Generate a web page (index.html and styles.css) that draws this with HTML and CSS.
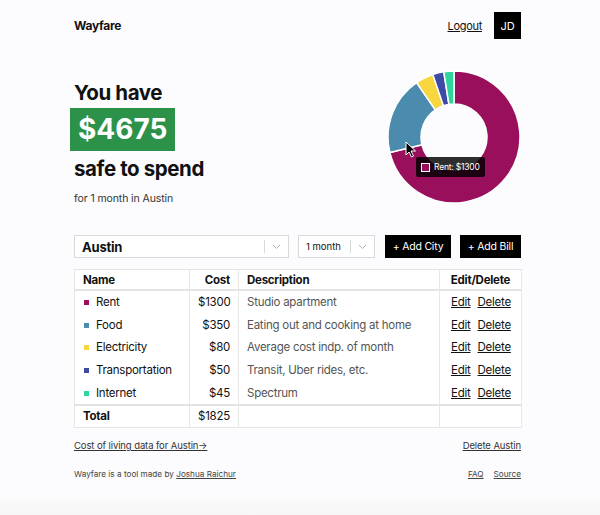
FILE: index.html
```html
<!DOCTYPE html>
<html lang="en">
<head>
<meta charset="utf-8">
<title>Wayfare</title>
<link rel="stylesheet" href="styles.css">
</head>
<body>
<div class="page">
  <header class="topbar">
    <div class="brand">Wayfare</div>
    <nav class="user">
      <a href="#" class="logout">Logout</a>
      <span class="avatar">JD</span>
    </nav>
  </header>

  <section class="hero">
    <div class="summary">
      <h1 class="line">You have</h1>
      <div class="amount">$4675</div>
      <h1 class="line">safe to spend</h1>
      <p class="period">for 1 month in Austin</p>
    </div>
    <div class="chart">
      <svg width="134" height="134" viewBox="0 0 134 134">
        <g stroke="#fff" stroke-width="1.5" stroke-linejoin="round">
          <path fill="#990f5c" d="M67,1 A66,66 0 1 1 2.84,82.47 L34.92,74.74 A33,33 0 1 0 67,34 Z"/>
          <path fill="#4b8bae" d="M2.84,82.47 A66,66 0 0 1 29.60,12.62 L48.30,39.81 A33,33 0 0 0 34.92,74.74 Z"/>
          <path fill="#f7d640" d="M29.60,12.62 A66,66 0 0 1 45.79,4.50 L56.40,35.75 A33,33 0 0 0 48.30,39.81 Z"/>
          <path fill="#3e4ba6" d="M45.79,4.50 A66,66 0 0 1 56.81,1.79 L61.91,34.40 A33,33 0 0 0 56.40,35.75 Z"/>
          <path fill="#2ed59d" d="M56.81,1.79 A66,66 0 0 1 67,1 L67,34 A33,33 0 0 0 61.91,34.40 Z"/>
        </g>
      </svg>
      <div class="tooltip"><span class="tip-swatch"></span>Rent: $1300</div>
      <svg class="cursor" width="12" height="17" viewBox="0 0 12 17">
        <path d="M1,1 L1,14 L4,11 L6.5,16 L8.5,15 L6,10 L10.5,10 Z" fill="#000" stroke="#fff" stroke-width="1"/>
      </svg>
    </div>
  </section>

  <section class="controls">
    <div class="select city">
      <span class="select-value">Austin</span>
      <span class="select-sep"></span>
      <svg class="chev" width="9" height="6" viewBox="0 0 9 6"><polyline points="1,1 4.5,4.5 8,1" fill="none" stroke="#b5b5b5" stroke-width="1"/></svg>
    </div>
    <div class="select months">
      <span class="select-value">1 month</span>
      <span class="select-sep"></span>
      <svg class="chev" width="9" height="6" viewBox="0 0 9 6"><polyline points="1,1 4.5,4.5 8,1" fill="none" stroke="#b5b5b5" stroke-width="1"/></svg>
    </div>
    <button class="btn add-city">+ Add City</button>
    <button class="btn add-bill">+ Add Bill</button>
  </section>

  <table class="bills">
    <colgroup>
      <col class="w-name">
      <col class="w-cost">
      <col class="w-desc">
      <col class="w-act">
    </colgroup>
    <thead>
      <tr>
        <th>Name</th>
        <th class="c-cost">Cost</th>
        <th>Description</th>
        <th class="c-act-h">Edit/Delete</th>
      </tr>
    </thead>
    <tbody>
      <tr>
        <td><span class="sw sw-rent"></span>Rent</td>
        <td class="c-cost">$1300</td>
        <td class="c-desc">Studio apartment</td>
        <td class="c-act"><a href="#">Edit</a><a href="#">Delete</a></td>
      </tr>
      <tr>
        <td><span class="sw sw-food"></span>Food</td>
        <td class="c-cost">$350</td>
        <td class="c-desc">Eating out and cooking at home</td>
        <td class="c-act"><a href="#">Edit</a><a href="#">Delete</a></td>
      </tr>
      <tr>
        <td><span class="sw sw-elec"></span>Electricity</td>
        <td class="c-cost">$80</td>
        <td class="c-desc">Average cost indp. of month</td>
        <td class="c-act"><a href="#">Edit</a><a href="#">Delete</a></td>
      </tr>
      <tr>
        <td><span class="sw sw-trans"></span>Transportation</td>
        <td class="c-cost">$50</td>
        <td class="c-desc">Transit, Uber rides, etc.</td>
        <td class="c-act"><a href="#">Edit</a><a href="#">Delete</a></td>
      </tr>
      <tr>
        <td><span class="sw sw-net"></span>Internet</td>
        <td class="c-cost">$45</td>
        <td class="c-desc">Spectrum</td>
        <td class="c-act"><a href="#">Edit</a><a href="#">Delete</a></td>
      </tr>
    </tbody>
    <tfoot>
      <tr>
        <td class="total">Total</td>
        <td class="c-cost">$1825</td>
        <td></td>
        <td></td>
      </tr>
    </tfoot>
  </table>

  <div class="links">
    <a href="#">Cost of living data for Austin→</a>
    <a href="#">Delete Austin</a>
  </div>

  <footer class="footer">
    <span>Wayfare is a tool made by <a href="#">Joshua Raichur</a></span>
    <span class="footer-links"><a href="#">FAQ</a><a href="#">Source</a></span>
  </footer>
</div>
</body>
</html>
```

FILE: styles.css
```css
html {
  min-height: 100%;
  background: linear-gradient(#fcfbfd calc(100% - 25px), #f7f7f8);
}
body {
  margin: 0;
  font-family: Inter, "Helvetica Neue", Arial, sans-serif;
  color: #111;
}
a { color: inherit; }

.page {
  width: 447px;
  margin-left: 74px;
}

.topbar {
  display: flex;
  justify-content: space-between;
  align-items: center;
  padding-top: 12px;
  height: 27px;
}
.brand {
  font-size: 12px;
  font-weight: 700;
  letter-spacing: -0.3px;
}
.user {
  display: flex;
  align-items: center;
  gap: 12px;
}
.logout {
  font-size: 11px;
  letter-spacing: -0.3px;
  color: #111;
}
.avatar {
  width: 27px;
  height: 27px;
  background: #000;
  color: #fff;
  font-size: 11px;
  display: flex;
  align-items: center;
  justify-content: center;
}

.hero {
  display: flex;
  justify-content: space-between;
  align-items: flex-start;
  margin-top: 31px;
}
.summary {
  padding-top: 10px;
}
.line {
  margin: 0;
  font-size: 20.5px;
  line-height: 26px;
  font-weight: 700;
  letter-spacing: -0.4px;
}
.amount {
  width: max-content;
  margin: 2px 0 5px -4px;
  padding: 0 8px;
  height: 43px;
  line-height: 43px;
  background: #2d9249;
  color: #fff;
  font-size: 28px;
  font-weight: 700;
}
.period {
  margin: 10px 0 0;
  font-size: 10.5px;
  letter-spacing: -0.1px;
  color: #333;
}

.chart {
  position: relative;
  width: 134px;
  height: 134px;
}
.chart svg { display: block; }
.tooltip {
  position: absolute;
  left: 29px;
  top: 87px;
  height: 20px;
  padding: 0 5px;
  display: flex;
  align-items: center;
  gap: 4px;
  background: rgba(0, 0, 0, 0.82);
  color: #fff;
  font-size: 8.5px;
  letter-spacing: -0.2px;
  border-radius: 2px;
}
.tip-swatch {
  width: 7px;
  height: 7px;
  background: #990f5c;
  border: 1px solid #fff;
}
.cursor {
  position: absolute;
  left: 18px;
  top: 71px;
}

.controls {
  display: flex;
  align-items: center;
  margin-top: 30px;
  height: 23px;
}
.select {
  display: flex;
  align-items: center;
  height: 23px;
  box-sizing: border-box;
  border: 1px solid #d9d9d9;
  background: #fff;
}
.city {
  width: 215px;
  padding-left: 7px;
}
.city .select-value {
  flex: 1;
  font-size: 13px;
  font-weight: 700;
  letter-spacing: -0.2px;
}
.months {
  width: 77px;
  margin-left: 9px;
  padding-left: 7px;
}
.months .select-value {
  flex: 1;
  font-size: 9.5px;
}
.select-sep {
  width: 1px;
  height: 13px;
  background: #d9d9d9;
  margin-right: 7px;
}
.chev {
  margin-right: 7px;
}
.btn {
  height: 23px;
  border: 0;
  background: #000;
  color: #fff;
  font-family: inherit;
  font-size: 10.5px;
  letter-spacing: -0.2px;
  padding: 0;
}
.add-city {
  width: 66px;
  margin-left: 10px;
}
.add-bill {
  width: 61px;
  margin-left: 9px;
}

.bills {
  margin-top: 11px;
  width: 447px;
  table-layout: fixed;
  border-collapse: collapse;
  font-size: 11.5px;
  letter-spacing: -0.25px;
  background: #fff;
  border: 1px solid #e4e4e4;
}
.w-name { width: 115px; }
.w-cost { width: 49px; }
.w-desc { width: 201px; }
.w-act { width: 82px; }
.bills th, .bills td {
  padding: 0 8px;
  height: 22.6px;
  border-left: 1px solid #e8e8e8;
  border-right: 1px solid #e8e8e8;
  white-space: nowrap;
}
.bills th {
  font-weight: 700;
  text-align: left;
  height: 19px;
  border-bottom: 2px solid #e4e4e4;
  color: #111;
}
.bills tfoot td {
  border-top: 2px solid #e4e4e4;
  height: 21px;
}
.bills .c-cost { text-align: right; }
.bills .c-act-h { text-align: center; }
.c-desc { color: #555; }
.bills .c-act { padding-left: 11px; }
.c-act a { color: #111; }
.c-act a + a { margin-left: 7px; }
.total { font-weight: 700; }
.sw {
  display: inline-block;
  width: 5px;
  height: 5px;
  margin: 0 7px 1px 1px;
  vertical-align: middle;
}
.sw-rent { background: #990f5c; }
.sw-food { background: #4b8bae; }
.sw-elec { background: #f7d640; }
.sw-trans { background: #3e4ba6; }
.sw-net { background: #2ed59d; }

.links {
  display: flex;
  justify-content: space-between;
  margin-top: 12px;
  font-size: 9.5px;
  letter-spacing: -0.1px;
  color: #333;
}
.footer {
  display: flex;
  justify-content: space-between;
  margin-top: 18px;
  font-size: 8.2px;
  color: #444;
}
.footer-links a + a { margin-left: 10px; }
```
